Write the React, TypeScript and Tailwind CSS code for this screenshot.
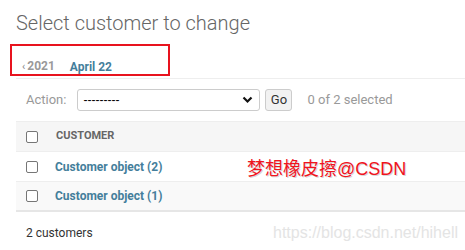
import React from "react";

function Checkbox() {
  return (
    <span className="inline-block w-[12px] h-[12px] rounded-[2px] border border-[#767676] bg-white" />
  );
}

export default function App() {
  return (
    <main className="relative w-[465px] h-[250px] overflow-hidden bg-white font-['Roboto','Liberation_Sans',sans-serif] text-[#333]">
      <div className="pl-4">
        {/* ── Title ── */}
        <h1 className="pt-[10px] h-[44px] text-[20px] font-light text-[#666] leading-[26px]">
          Select customer to change
        </h1>

        {/* ── Date hierarchy ── */}
        <div className="relative h-[35px] border-b border-[#eee]">
          <div className="absolute left-[-6px] top-0 w-[160px] h-[32px] border-2 border-[#e8131e]" />
          <div className="flex items-end gap-[15px] pl-[6px] pt-[14px] text-[12px] font-bold leading-[16px]">
            <span className="text-[#999]">
              <span className="text-[11px] font-normal text-[#888] mr-[2px]">‹</span>2021
            </span>
            <span className="text-[#447e9b]">April 22</span>
          </div>
        </div>

        {/* ── Actions ── */}
        <div className="flex items-center h-[42px] pl-[10px] text-[13px] text-[#999]">
          <span className="mr-[11px]">Action:</span>
          <div className="flex items-center justify-between w-[183px] h-[22px] border border-[#ccc] rounded-[3px] bg-white pl-[5px] pr-[6px]">
            <span className="text-black text-[12px] leading-[14px] font-['Liberation_Sans',sans-serif]">---------</span>
            <svg width="11" height="8" viewBox="0 0 11 8">
              <path d="M1.5 1.5 L5.5 5.5 L9.5 1.5" fill="none" stroke="#111" strokeWidth="2.2" />
            </svg>
          </div>
          <div className="ml-[5px] flex items-center justify-center w-[27px] h-[22px] border border-[#ccc] rounded-[3px] bg-[#f2f2f2] text-[#333] text-[13px]">
            Go
          </div>
          <span className="ml-[15px]">0 of 2 selected</span>
        </div>

        {/* ── Table ── */}
        <div className="border-t border-[#eee]">
          <div className="flex items-center h-[30px] bg-[#f6f6f6] border-b border-[#eee] pl-[10px]">
            <Checkbox />
            <span className="ml-[18px] text-[11px] font-bold text-[#666]">CUSTOMER</span>
          </div>
          <div className="flex items-center h-[30px] bg-white border-b border-[#eee] pl-[10px]">
            <Checkbox />
            <span className="ml-[17px] text-[12px] font-bold text-[#447e9b]">Customer object (2)</span>
          </div>
          <div className="flex items-center h-[30px] bg-[#f9f9f9] border-b-2 border-[#e6e6e6] pl-[10px]">
            <Checkbox />
            <span className="ml-[17px] text-[12px] font-bold text-[#447e9b]">Customer object (1)</span>
          </div>
        </div>

        <p className="pl-[10px] pt-[12px] text-[12px] text-[#333]">2 customers</p>
      </div>

      {/* ── Watermarks ── */}
      <span className="absolute left-[247px] top-[157px] text-[18px] leading-[24px] text-[#f0141e] font-['Liberation_Sans','Noto_Sans_CJK_SC',sans-serif] [text-shadow:1px_1px_0_#d8d8d8]">
        梦想橡皮擦@CSDN
      </span>
      <span className="absolute left-[273px] top-[222px] text-[16px] leading-[22px] text-[#e4e4e4] font-['Liberation_Sans',sans-serif]">
        https://blog.csdn.net/hihell
      </span>
    </main>
  );
}
